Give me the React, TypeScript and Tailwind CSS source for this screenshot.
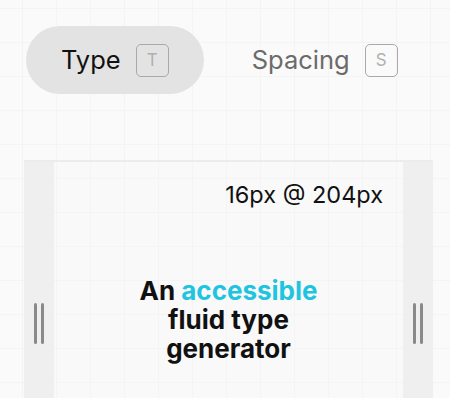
import React from "react";

const grid =
  "[background-image:linear-gradient(to_right,#f4f4f4_1px,transparent_1px),linear-gradient(to_bottom,#f4f4f4_1px,transparent_1px)] [background-size:34px_34px] [background-position:22px_8px] [background-attachment:fixed]";

function Handle() {
  return (
    <div className="w-[30px] shrink-0 bg-[#efefef] flex items-center justify-center gap-[4.5px]">
      <div className="w-[2.5px] h-[41px] rounded-full bg-[#8a8a8a]" />
      <div className="w-[2.5px] h-[41px] rounded-full bg-[#8a8a8a]" />
    </div>
  );
}

function Key({ k }: { k: string }) {
  return (
    <span className="w-[33px] h-[33px] rounded-[5px] border border-[#a9a9a9] flex items-center justify-center text-[17px] leading-none text-[#b0b0b0]">
      {k}
    </span>
  );
}

export default function App() {
  return (
    <div
      className={`w-[450px] h-[398px] overflow-hidden bg-[#fafafa] ${grid}`}
      style={{ fontFamily: "Inter, 'Noto Sans', sans-serif" }}
    >
      <div className="flex items-center gap-[13px] pl-[26px] pt-[26px]">
        <div className="h-[68px] rounded-full bg-[#e3e3e3] px-[35px] flex items-center gap-[15px]">
          <span className="text-[25.5px] leading-none text-[#111]">Type</span>
          <Key k="T" />
        </div>
        <div className="h-[68px] rounded-full px-[35px] flex items-center gap-[15px]">
          <span className="text-[25.5px] leading-none text-[#6b6b6b]">Spacing</span>
          <Key k="S" />
        </div>
      </div>
      <div className="ml-[24px] mt-[66px] w-[409px] h-[324px] border-t-2 border-[#ececec] flex">
        <Handle />
        <div className={`flex-1 bg-[#f9f9f9] ${grid}`}>
          <div className="pt-[16px] pr-[20px] text-right text-[23.5px] leading-[33px] text-[#111]">
            16px @ 204px
          </div>
          <div className="mt-[65px] text-center text-[26px] leading-[29px] font-bold text-[#111]">
            An <span className="text-[#1fc4df]">accessible</span>
            <br />
            fluid type
            <br />
            generator
          </div>
        </div>
        <Handle />
      </div>
    </div>
  );
}
